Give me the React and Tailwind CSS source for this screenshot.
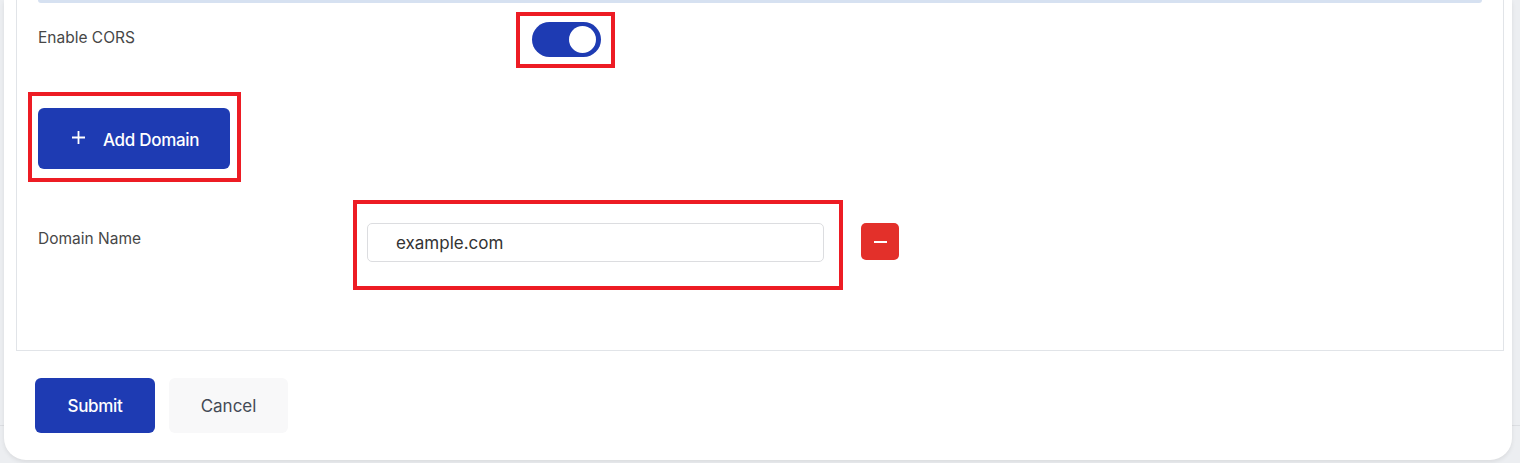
import React, { useState } from 'react';

const blue = 'bg-[#1e3bb3]';

function Toggle({ on, onChange }) {
  return (
    <button
      onClick={() => onChange(!on)}
      className={`relative flex h-[35px] w-[69px] items-center rounded-full ${on ? blue : 'bg-gray-300'}`}
    >
      <span className={`absolute h-[27px] w-[27px] rounded-full bg-white ${on ? 'right-[5px]' : 'left-[5px]'}`} />
    </button>
  );
}

export default function CorsSettings() {
  const [cors, setCors] = useState(true);
  const [domains, setDomains] = useState(['example.com']);

  return (
    <div className="h-[463px] overflow-hidden bg-[#eceef1] bg-[linear-gradient(to_bottom,#eceef1_425px,#dcdee2_425px,#dcdee2_426px,#eceef1_426px)] pl-[4px] pr-[8px] font-['Inter',sans-serif]">
      <div className="flex h-[460px] flex-col rounded-b-[22px] bg-white pl-[12px] pr-[8px] shadow-[0_2px_4px_rgba(0,0,0,0.08)]">
        <div className="h-[351px] border-x border-b border-[#e1e4e8] px-[21px]">
          <div className="h-[3px] rounded-b-[3px] bg-[#d6e1f1]" />

          {/* enable cors */}
          <div className="mt-[9px] flex items-start">
            <div className="mt-[14px] w-[478px] text-[15.5px] text-[#474747]">Enable CORS</div>
            <div className="border-4 border-[#ed1c24] pb-[7px] pl-[12px] pr-[10px] pt-[6px]">
              <Toggle on={cors} onChange={setCors} />
            </div>
          </div>

          {/* add domain */}
          <div className="ml-[-10px] mt-[24px] inline-block border-4 border-[#ed1c24] pb-[9px] pl-[6px] pr-[7px] pt-[12px]">
            <button
              onClick={() => setDomains([...domains, ''])}
              className={`flex h-[61px] w-[192px] items-center rounded-[6px] ${blue} pl-[34px] text-[17px] font-medium tracking-[-0.3px] text-white`}
            >
              <svg width="13" height="13" viewBox="0 0 13 13" className="mr-[18px] mt-[-2px]">
                <path d="M6.5 0v13M0 6.5h13" stroke="white" strokeWidth="1.8" />
              </svg>
              <span className="pt-[5px]">Add Domain</span>
            </button>
          </div>

          {/* domain rows */}
          {domains.slice(0, 1).map((d, i) => (
            <div key={i} className="mt-[18px] flex items-start">
              <div className="mt-[27px] w-[315px] text-[15.5px] text-[#474747]">Domain Name</div>
              <div className="border-4 border-[#ed1c24] pb-[24px] pl-[10px] pr-[15px] pt-[19px]">
                <input
                  value={d}
                  onChange={(e) => setDomains(domains.map((x, j) => (j === i ? e.target.value : x)))}
                  className="h-[39px] w-[457px] rounded-[5px] border border-[#dcdde0] pl-[28px] text-[17px] text-[#333] outline-none"
                />
              </div>
              <button
                onClick={() => setDomains(domains.filter((_, j) => j !== i))}
                className="ml-[18px] mt-[23px] flex h-[37px] w-[38px] items-center justify-center rounded-[5px] bg-[#e3302a]"
              >
                <span className="h-[2px] w-[13px] bg-white" />
              </button>
            </div>
          ))}
        </div>

        <div className="mt-[27px] flex gap-[14px] pl-[19px]">
          <button className={`h-[55px] w-[120px] rounded-[6px] ${blue} pt-[2px] text-[17px] font-medium tracking-[-0.3px] text-white`}>
            Submit
          </button>
          <button className="h-[55px] w-[119px] rounded-[6px] bg-[#f8f8f9] pt-[2px] text-[17px] text-[#444a55]">
            Cancel
          </button>
        </div>
      </div>
    </div>
  );
}
